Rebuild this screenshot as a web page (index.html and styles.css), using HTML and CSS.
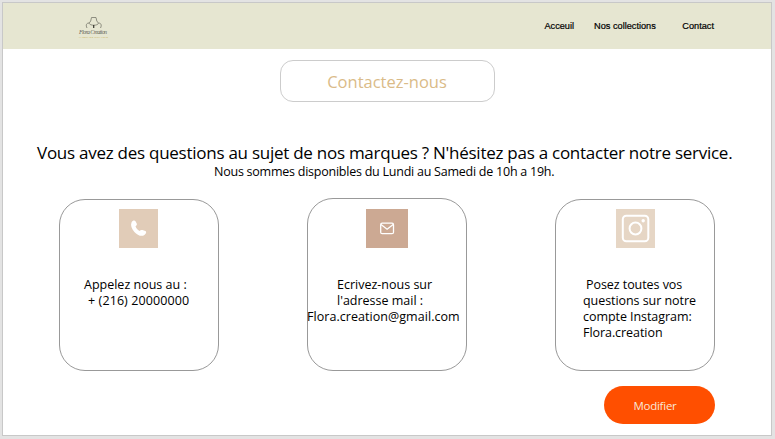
FILE: index.html
```html
<!DOCTYPE html>
<html lang="fr">
<head>
<meta charset="utf-8">
<title>Contactez-nous</title>
<link rel="stylesheet" href="styles.css">
</head>
<body>
<div class="page">
  <header class="header">
    <svg class="logo" viewBox="0 0 32 24" fill="none">
      <path d="M12.500 1.500h4.500l.8 3.500 1.700 2.200c-.5 1.500-2.500 2-4.700 2s-4.200-.5-4.700-2l1.600-2.200z" stroke="#77776b" stroke-width=".8"/>
      <path d="M10 7c-2.500 0-3.500 2-2 5M19.500 7c2.500 0 3.500 2 2 5" stroke="#77776b" stroke-width=".8"/>
      <path d="M14.700 9v3" stroke="#33332c" stroke-width="1.200"/>
      <text class="logo-name" x="0" y="18" textLength="28">Flora Creation</text>
      <text class="logo-tag" x="0" y="22.300" textLength="29">HANDMADE WITH LOVE</text>
    </svg>
    <nav class="nav">
      <a class="nav-home">Acceuil</a>
      <a class="nav-collections">Nos collections</a>
      <a>Contact</a>
    </nav>
  </header>
  <main class="main">
    <h1 class="title">Contactez-nous</h1>
    <p class="question">Vous avez des questions au sujet de nos marques ? N'hésitez pas a contacter notre service.</p>
    <p class="hours">Nous sommes disponibles du Lundi au Samedi de 10h a 19h.</p>
    <section class="cards">
      <article class="card card-phone">
        <svg class="icon" viewBox="0 0 39 39"><path d="M12.500 13.500c1-2 3.200-2.500 4-1.200l1.200 2.200c.6 1.200-.2 2-1.200 2.800.8 2 2 3.400 4 4.800.8-1 1.900-1.500 3-1l2.800 1c1.600.8.800 2.900-1.300 4.200-2.700 1.600-7-.4-9.600-3.400-2.800-3.200-4.100-6.700-2.900-9.400z" fill="#fff"/></svg>
        <p class="text">Appelez nous au :<br><span class="number">+ (216) 20000000</span></p>
      </article>
      <article class="card card-mail">
        <svg class="icon" viewBox="0 0 42 39" fill="none" stroke="#fff" stroke-width="1.300"><rect x="14.700" y="14.200" width="12.800" height="10.500" rx="1.500"/><path d="M15 15.500l6.100 4.700 6.100-4.700"/></svg>
        <p class="text">Ecrivez-nous sur<br>l'adresse mail :<br><span class="email">Flora.creation@gmail.com</span></p>
      </article>
      <article class="card card-insta">
        <svg class="icon" viewBox="0 0 39 39" fill="none" stroke="#fff" stroke-width="2"><rect x="6.800" y="6.800" width="25.500" height="25.500" rx="3.500"/><circle cx="19.500" cy="19.500" r="5.900"/><circle cx="27.200" cy="11.800" r="1.700" fill="#fff" stroke="none"/></svg>
        <p class="text"><span class="lead">Posez toutes vos</span><br>questions sur notre<br>compte Instagram:<br>Flora.creation</p>
      </article>
    </section>
    <button class="edit">Modifier</button>
  </main>
</div>
</body>
</html>
```
FILE: styles.css
```css
* { box-sizing: border-box; }
body {
  margin: 0;
  padding: 2px;
  height: 439px;
  overflow: hidden;
  background: #e3e3e3;
  font-family: "Open Sans", "Noto Sans", sans-serif;
  color: #000;
}
h1, p { margin: 0; font-weight: 400; white-space: nowrap; }
.page { width: 770px; height: 434px; border: 1px solid #c8c8c8; background: #fff; }
.header {
  display: flex;
  justify-content: space-between;
  height: 46px;
  padding: 13px 57px 0 76px;
  background: #e6e6d1;
}
.logo { width: 32px; height: 24px; overflow: visible; }
.logo-name { font: italic 6px "Liberation Serif", serif; fill: #66665b; }
.logo-tag { font: 2.200px "Liberation Sans", sans-serif; fill: #c9b25a; }
.nav {
  display: flex;
  font: 9.200px/20px "Liberation Sans", sans-serif;
  -webkit-text-stroke: .2px #000;
}
.nav-home { margin-right: 20px; }
.nav-collections { margin-right: 26.500px; }
.main { display: flex; flex-direction: column; }
.title {
  width: 215px;
  height: 42px;
  margin: 11px 0 0 276.500px;
  border: 1px solid #ccc;
  border-radius: 13px;
  text-align: center;
  font-size: 16.500px;
  line-height: 42px;
  color: #dabb88;
}
.question { margin: 41px 0 0 34px; font-size: 17px; line-height: 20px; letter-spacing: -.26px; }
.hours { margin: 0 0 0 211px; font-size: 12.500px; line-height: 18px; letter-spacing: -.24px; }
.cards { display: flex; align-items: flex-end; gap: 88px; margin: 17px 0 0 56px; }
.card {
  width: 160px;
  height: 172px;
  padding-top: 9px;
  border: 1px solid #999;
  border-radius: 26px;
}
.icon { display: block; height: 39px; }
.text { margin-top: 29px; font-size: 12.500px; line-height: 16px; }
.card-phone .icon { width: 39px; margin-left: 59px; background: #e1ccb8; }
.card-phone .text { margin-left: 24px; }
.number { margin-left: 4px; letter-spacing: .1px; }
.card-mail { height: 173px; padding-top: 10px; }
.card-mail .icon { width: 42px; margin-left: 58px; background: #cca993; }
.card-mail .text { margin-left: 29px; }
.email { margin-left: -30px; letter-spacing: .05px; }
.card-insta .icon { width: 39px; margin-left: 60px; background: #e6d6c5; }
.card-insta .text { margin-left: 27px; letter-spacing: -.06px; }
.lead { margin-left: 3px; }
.edit {
  width: 111px;
  height: 38px;
  margin: 15px 0 0 601px;
  padding: 0 9px 0 0;
  border: 0;
  border-radius: 19px;
  background: #ff4f00;
  color: #f9e8d8;
  font: 11.500px/40px "Open Sans", sans-serif;
  letter-spacing: -.25px;
}
```
